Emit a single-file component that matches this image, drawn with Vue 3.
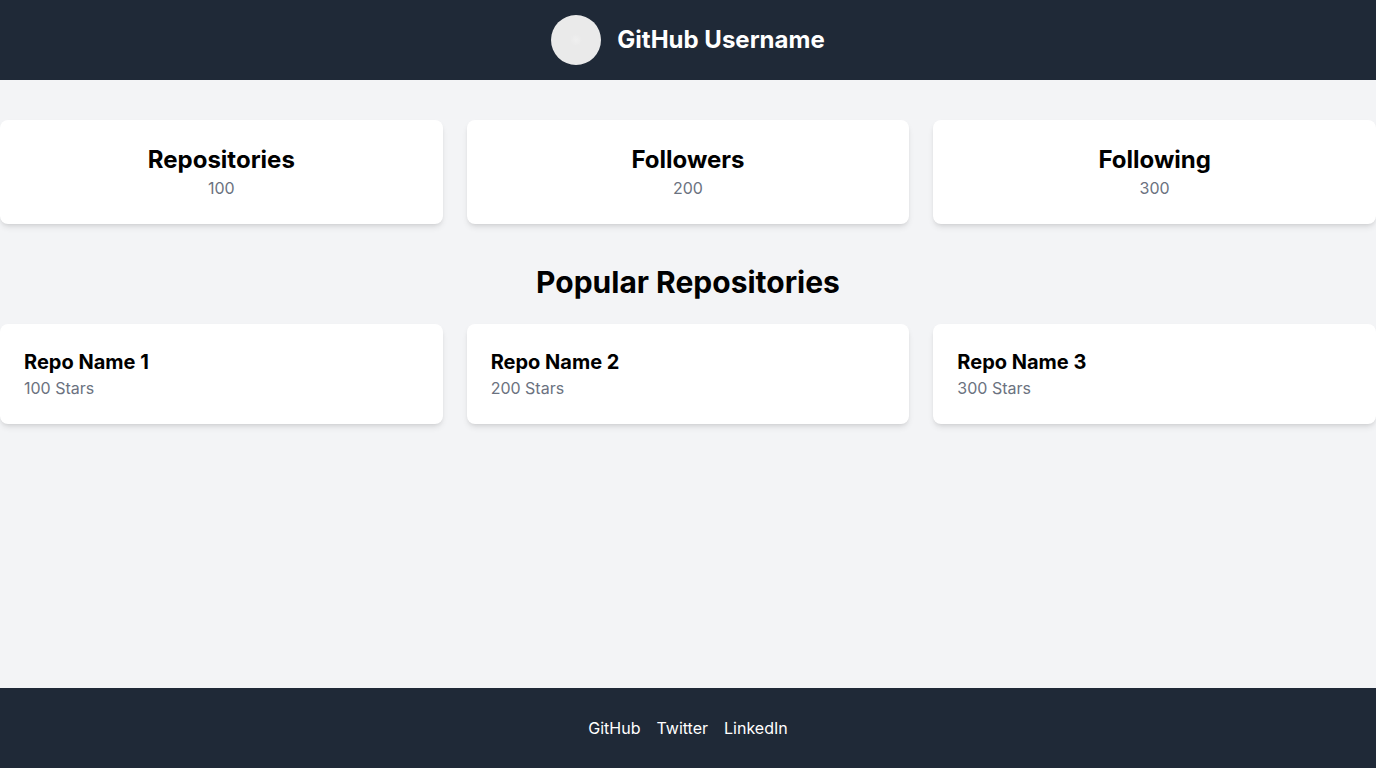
<script setup>
const stats = [
  { label: 'Repositories', value: 100 },
  { label: 'Followers', value: 200 },
  { label: 'Following', value: 300 },
]
const repos = [
  { name: 'Repo Name 1', stars: 100 },
  { name: 'Repo Name 2', stars: 200 },
  { name: 'Repo Name 3', stars: 300 },
]
const links = ['GitHub', 'Twitter', 'LinkedIn']
</script>

<template>
  <div class="page">
    <header class="bar header">
      <svg class="avatar" viewBox="0 0 50 50" aria-hidden="true">
        <defs>
          <radialGradient id="glow">
            <stop offset="0" stop-color="#efefef" />
            <stop offset="1" stop-color="#eaeaea" />
          </radialGradient>
        </defs>
        <circle cx="25" cy="25" r="25" fill="#eaeaea" />
        <circle cx="25" cy="25" r="6" fill="url(#glow)" />
      </svg>
      <h1>GitHub Username</h1>
    </header>
    <main>
      <section class="grid stats">
        <article v-for="s in stats" :key="s.label" class="card stat">
          <h2>{{ s.label }}</h2>
          <p>{{ s.value }}</p>
        </article>
      </section>
      <section class="popular">
        <h2 class="title">Popular Repositories</h2>
        <div class="grid">
          <article v-for="r in repos" :key="r.name" class="card">
            <h3>{{ r.name }}</h3>
            <p>{{ r.stars }} Stars</p>
          </article>
        </div>
      </section>
    </main>
    <footer class="bar footer">
      <a v-for="l in links" :key="l" href="#">{{ l }}</a>
    </footer>
  </div>
</template>

<style>
body {
  margin: 0;
}
</style>

<style scoped>
.page {
  min-height: 100vh;
  display: flex;
  flex-direction: column;
  background: #f3f4f6;
  color: #000;
  font-family: Inter, "Liberation Sans", sans-serif;
  font-size: 16px;
  line-height: 24px;
}
h1, h2, h3, p {
  margin: 0;
}
.bar {
  min-height: 80px;
  display: flex;
  align-items: center;
  justify-content: center;
  gap: 16px;
  background: #1f2937;
  color: #fff;
}
.avatar {
  width: 50px;
  height: 50px;
}
h1, h2 {
  font-size: 24px;
  line-height: 32px;
  font-weight: 700;
}
main {
  flex: 1;
  padding: 40px 0;
}
.grid {
  display: grid;
  grid-template-columns: repeat(3, 1fr);
  gap: 24px;
}
.card {
  padding: 24px;
  background: #fff;
  border-radius: 8px;
  box-shadow: 0 4px 6px -1px rgba(0, 0, 0, 0.1), 0 2px 4px -2px rgba(0, 0, 0, 0.1);
}
.stat {
  text-align: center;
}
.card p {
  color: #6b7280;
}
.popular {
  margin-top: 40px;
}
.title {
  margin-bottom: 24px;
  font-size: 30px;
  line-height: 36px;
  text-align: center;
}
h3 {
  font-size: 20px;
  line-height: 28px;
  font-weight: 700;
}
.footer a {
  color: inherit;
  text-decoration: none;
}
</style>
